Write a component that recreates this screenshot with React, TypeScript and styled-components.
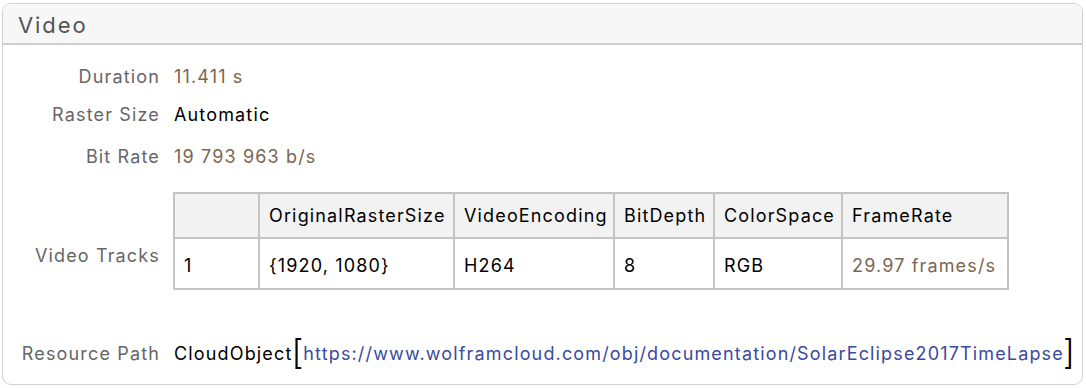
import React from "react";
import styled, { createGlobalStyle } from "styled-components";

const Global = createGlobalStyle`
  html, body {
    margin: 0;
    padding: 0;
    background: #ffffff;
  }
  body {
    font-family: Inter, "Noto Sans", sans-serif;
    -webkit-font-smoothing: antialiased;
  }
`;

const Panel = styled.div`
  margin: 3px 2px 0 2px;
  width: 1081px;
  height: 382px;
  box-sizing: border-box;
  border: 1px solid #d2d2d2;
  border-radius: 9px;
  overflow: hidden;
  display: flex;
  flex-direction: column;
`;

const Header = styled.div`
  height: 41px;
  box-sizing: border-box;
  background: #f7f7f7;
  border-bottom: 2px solid #cdcdcd;
  padding: 3px 0 0 15px;
  display: flex;
  align-items: center;
  font-size: 22px;
  letter-spacing: 1.9px;
  color: #555555;
`;

const Body = styled.div`
  display: flex;
  flex-direction: column;
  padding-top: 17px;
  letter-spacing: 1.15px;
`;

interface RowProps {
  $top: number;
  $bottom?: boolean;
}

const Row = styled.div<RowProps>`
  display: flex;
  align-items: ${({ $bottom }) => ($bottom ? "flex-end" : "center")};
  gap: 14px;
  margin-top: ${({ $top }) => `${$top}px`};
  min-height: 30px;
  font-size: 18px;
`;

interface LabelProps {
  $lift?: number;
}

const Label = styled.div<LabelProps>`
  width: 157px;
  text-align: right;
  color: #666666;
  line-height: 20px;
  margin-bottom: ${({ $lift }) => `${$lift ?? 0}px`};
  flex-shrink: 0;
  white-space: nowrap;
`;

const Value = styled.div`
  color: #000000;
  line-height: 20px;
  display: flex;
  align-items: center;
  white-space: nowrap;
`;

const Quantity = styled.span`
  color: #7a6650;
`;

const Grid = styled.table`
  border-collapse: collapse;
  font-size: 18px;
  margin-left: -1px;
  table-layout: fixed;
  width: 834px;

  td {
    border: 2px solid #c4c4c4;
    padding: 0 0 0 9px;
    text-align: left;
    white-space: nowrap;
    overflow: hidden;
  }
`;

const HeadRow = styled.tr`
  height: 45px;
  background: #f2f2f2;
`;

const DataRow = styled.tr`
  height: 51px;
  background: #ffffff;

  td {
    padding-top: 3px;
  }
`;

interface CellProps {
  $w: number;
}

const Cell = styled.td<CellProps>`
  width: ${({ $w }) => `${$w}px`};
  box-sizing: border-box;
`;

const Bracket = styled.span`
  font-family: Inter, sans-serif;
  font-weight: 300;
  font-size: 34px;
  line-height: 30px;
  letter-spacing: 0;
  color: #000000;
  display: inline-block;
  margin: -4px 0 0 -1px;
`;

const Link = styled.span`
  color: #3a4a9e;
`;

const columns = [
  { head: "", value: "1", w: 85 },
  { head: "OriginalRasterSize", value: "{1920, 1080}", w: 195 },
  { head: "VideoEncoding", value: "H264", w: 160 },
  { head: "BitDepth", value: "8", w: 100 },
  { head: "ColorSpace", value: "RGB", w: 128 },
  { head: "FrameRate", value: "29.97 frames/s", w: 166, q: true },
];

export default function App() {
  return (
    <>
      <Global />
      <Panel>
        <Header>Video</Header>
        <Body>
          <Row $top={0}>
            <Label>Duration</Label>
            <Value>
              <Quantity>11.411 s</Quantity>
            </Value>
          </Row>
          <Row $top={8}>
            <Label>Raster Size</Label>
            <Value>Automatic</Value>
          </Row>
          <Row $top={12}>
            <Label>Bit Rate</Label>
            <Value>
              <Quantity>19 793 963 b/s</Quantity>
            </Value>
          </Row>
          <Row $top={20} $bottom>
            <Label $lift={24}>Video Tracks</Label>
            <Grid>
              <tbody>
                <HeadRow>
                  {columns.map((c) => (
                    <Cell key={c.head || "idx"} $w={c.w}>
                      {c.head}
                    </Cell>
                  ))}
                </HeadRow>
                <DataRow>
                  {columns.map((c) => (
                    <Cell key={c.head || "idx"} $w={c.w}>
                      {c.q ? <Quantity>{c.value}</Quantity> : c.value}
                    </Cell>
                  ))}
                </DataRow>
              </tbody>
            </Grid>
          </Row>
          <Row $top={49}>
            <Label>Resource Path</Label>
            <Value>
              CloudObject
              <Bracket>[</Bracket>
              <Link>https://www.wolframcloud.com/obj/documentation/SolarEclipse2017TimeLapse</Link>
              <Bracket>]</Bracket>
            </Value>
          </Row>
        </Body>
      </Panel>
    </>
  );
}
